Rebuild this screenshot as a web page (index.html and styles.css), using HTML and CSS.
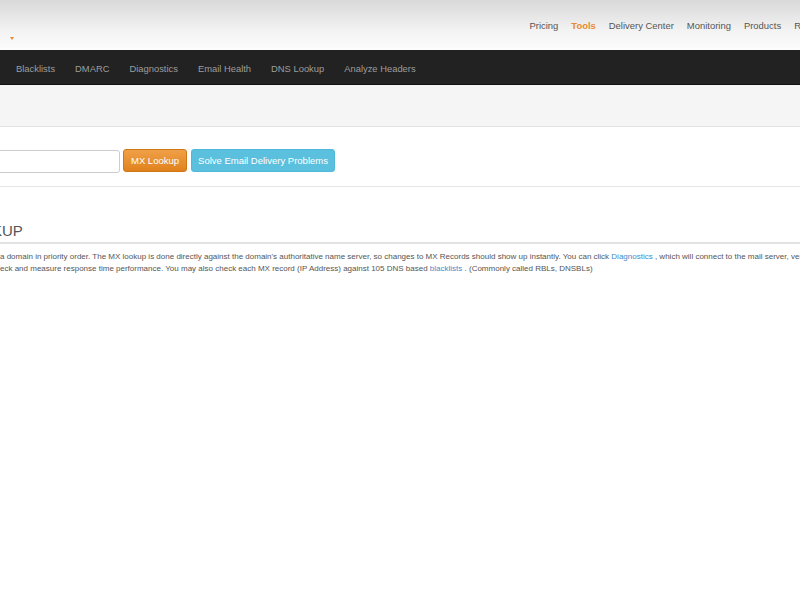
FILE: index.html
```html
<!DOCTYPE html>
<html>
<head>
<meta charset="utf-8">
<link rel="stylesheet" href="styles.css">
</head>
<body>
<header class="topbar">
  <div class="brand"><span class="caret"></span></div>
  <nav class="topnav">
    <a>Pricing</a>
    <a class="active">Tools</a>
    <a>Delivery Center</a>
    <a>Monitoring</a>
    <a>Products</a>
    <a>R</a>
  </nav>
</header>
<nav class="toolbar">
  <a>Blacklists</a>
  <a>DMARC</a>
  <a>Diagnostics</a>
  <a>Email Health</a>
  <a>DNS Lookup</a>
  <a>Analyze Headers</a>
</nav>
<div class="band"></div>
<section class="search">
  <input class="domain" type="text">
  <button class="btn btn-orange">MX Lookup</button>
  <button class="btn btn-blue">Solve Email Delivery Problems</button>
</section>
<section class="content">
  <h2 class="title"><span class="clip">KUP</span></h2>
  <div class="desc">
    <div class="line">a domain in priority order. The MX lookup is done directly against the domain's authoritative name server, so changes to MX Records should show up instantly. You can click <a>Diagnostics</a> , which will connect to the mail server, ver</div>
    <div class="line">eck and measure response time performance. You may also check each MX record (IP Address) against 105 DNS based <a>blacklists</a> . (Commonly called RBLs, DNSBLs)</div>
  </div>
</section>
</body>
</html>
```

FILE: styles.css
```css
html, body {
  margin: 0;
  padding: 0;
  background: #fff;
  overflow: hidden;
  width: 800px;
  height: 600px;
}
body {
  font-family: "Liberation Sans", Arial, sans-serif;
  color: #555;
}
a { cursor: pointer; }

.topbar {
  height: 50px;
  background: linear-gradient(to bottom, #d9d9d9 0%, #f2f2f2 60%, #fcfcfc 100%);
  display: flex;
  justify-content: space-between;
  align-items: flex-start;
  box-sizing: border-box;
}
.brand {
  width: 30px;
  height: 50px;
  position: relative;
}
.caret {
  position: absolute;
  left: 10px;
  top: 37px;
  width: 0;
  height: 0;
  border-left: 2.5px solid transparent;
  border-right: 2.5px solid transparent;
  border-top: 3px solid #e8893a;
}
.topnav {
  display: flex;
  gap: 13px;
  padding-top: 20px;
  margin-right: -1px;
  font-size: 9.45px;
  white-space: nowrap;
}
.topnav a { color: #555; }
.topnav a.active { color: #e88a2e; font-weight: bold; }

.toolbar {
  background: #222;
  border-bottom: 1px solid #111;
  display: flex;
  align-items: center;
  gap: 20px;
  padding-left: 16px;
  padding-top: 2px;
  box-sizing: border-box;
  height: 35px;
  font-size: 9.4px;
  white-space: nowrap;
}
.toolbar a { color: #9d9d9d; }

.band {
  height: 41px;
  background: #f5f5f5;
  border-bottom: 1px solid #e3e3e3;
}

.search {
  height: 60px;
  border-bottom: 1px solid #e5e5e5;
  display: flex;
  align-items: flex-start;
  gap: 3px;
  padding-top: 22px;
  box-sizing: border-box;
}
.domain {
  width: 130px;
  height: 23px;
  margin-left: -10px;
  margin-top: 1px;
  box-sizing: border-box;
  border: 1px solid #ccc;
  border-radius: 3px;
  font-size: 10px;
}
.btn {
  height: 23px;
  border-radius: 3px;
  font-family: "Liberation Sans", Arial, sans-serif;
  font-size: 9.5px;
  color: #fff;
  padding: 0;
  white-space: nowrap;
  cursor: pointer;
}
.btn-orange {
  width: 64px;
  background: linear-gradient(to bottom, #f0a048 0%, #e0821c 100%);
  border: 1px solid #cf7714;
}
.btn-blue {
  width: 144px;
  background: #5bc0de;
  border: 1px solid #4fb9d9;
  margin-left: 1px;
}

.content {
  padding-top: 35px;
}
.title {
  margin: 0;
  font-size: 15px;
  font-weight: normal;
  color: #555;
  line-height: 18px;
  padding-bottom: 2px;
  border-bottom: 2px solid #e2e2e2;
  overflow: hidden;
}
.clip {
  display: inline-block;
  margin-left: -8px;
}
.desc {
  padding-top: 7px;
  font-size: 8px;
  line-height: 12px;
}
.line {
  white-space: nowrap;
}
.desc a { color: #428bca; }
```
